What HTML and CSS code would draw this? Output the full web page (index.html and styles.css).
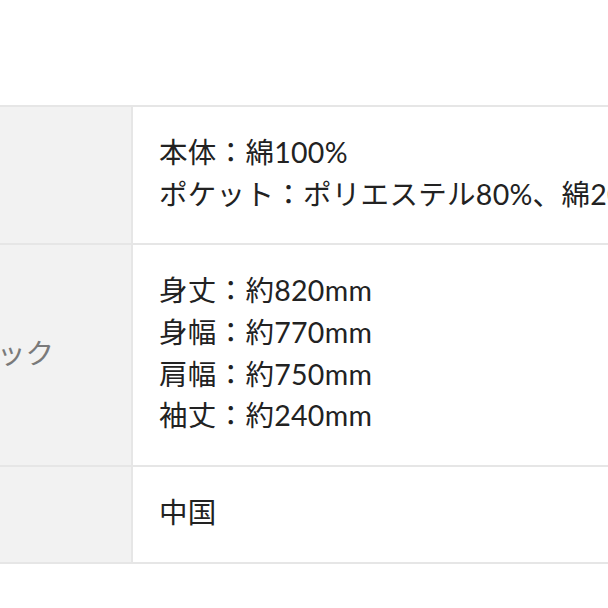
FILE: index.html
```html
<!DOCTYPE html>
<html lang="ja">
<head>
<meta charset="utf-8">
<link rel="stylesheet" href="styles.css">
</head>
<body>
<div class="spec">
  <div class="row">
    <div class="label">素材</div>
    <div class="value">
      <div>本体：綿100%</div>
      <div>ポケット：ポリエステル80%、綿20%</div>
    </div>
  </div>
  <div class="row">
    <div class="label">カラー：ブラック</div>
    <div class="value">
      <div>身丈：約820mm</div>
      <div>身幅：約770mm</div>
      <div>肩幅：約750mm</div>
      <div>袖丈：約240mm</div>
    </div>
  </div>
  <div class="row">
    <div class="label">原産国</div>
    <div class="value">
      <div>中国</div>
    </div>
  </div>
</div>
</body>
</html>
```
FILE: styles.css
```css
html, body {
  margin: 0;
  padding: 0;
  background: #ffffff;
  overflow: hidden;
}
body {
  width: 608px;
  height: 608px;
  font-family: Lato, "Noto Sans CJK JP", sans-serif;
  color: #222222;
}
.spec {
  margin-top: 105px;
  margin-left: -200px;
  width: 1000px;
  border-top: 2px solid #e6e6e6;
}
.row {
  display: grid;
  grid-template-columns: 333px 1fr;
  border-bottom: 2px solid #e6e6e6;
}
.label {
  background: #f2f2f2;
  border-right: 2px solid #e6e6e6;
  color: #7a7a7a;
  font-size: 28.5px;
  line-height: 41.67px;
  padding-left: 26px;
  padding-bottom: 3px;
  display: flex;
  align-items: center;
  white-space: nowrap;
}
.value {
  padding: 25px 0 28px 26px;
  font-size: 28.5px;
  line-height: 41.67px;
  letter-spacing: 0.3px;
  white-space: nowrap;
}
```
